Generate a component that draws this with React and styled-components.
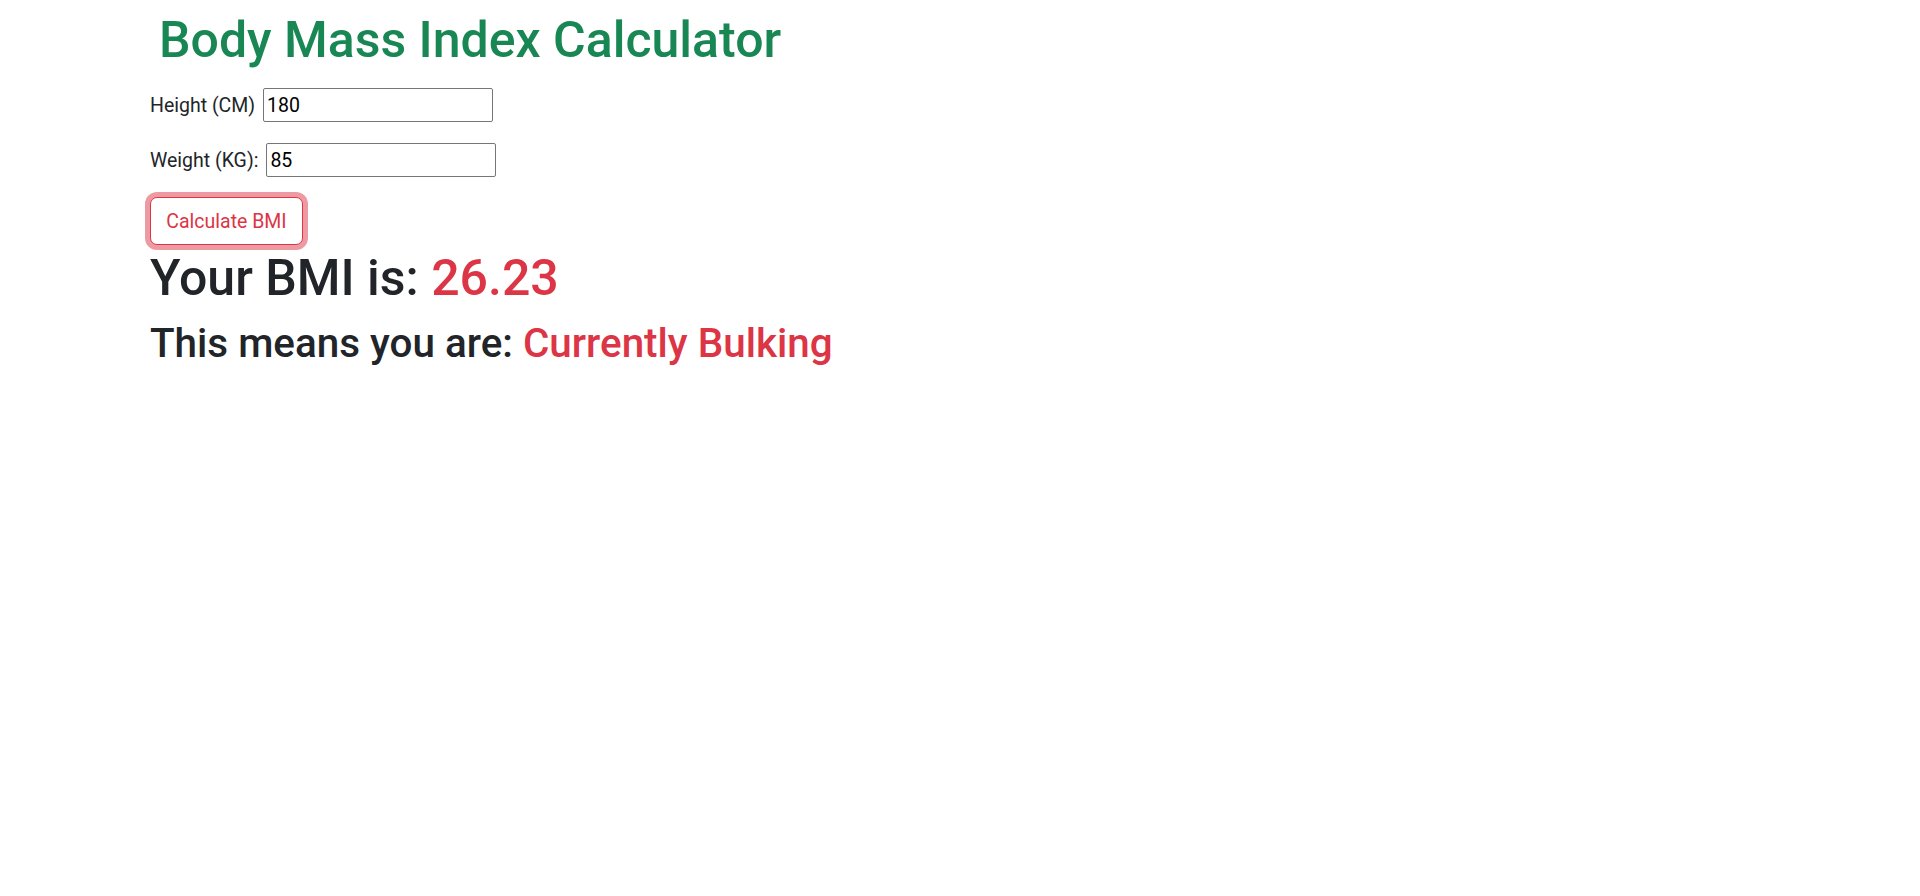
import React, { useState } from "react";
import styled, { createGlobalStyle } from "styled-components";

const GlobalStyle = createGlobalStyle`
  body {
    margin: 0;
    background: #ffffff;
    color: #212529;
    font-family: Roboto, "Liberation Sans", sans-serif;
  }
`;

const Page = styled.div`
  display: flex;
  flex-direction: column;
  align-items: flex-start;
  padding: 10px 0 0 150px;
`;

const Title = styled.h1`
  margin: 0 0 18px;
  padding-left: 9px;
  font-size: 50px;
  line-height: 60px;
  font-weight: 500;
  color: #198754;
`;

const Field = styled.div`
  display: flex;
  align-items: center;
  gap: 8px;
  height: 34px;
  margin-bottom: ${props => (props.last ? "20px" : "21px")};
`;

const Label = styled.label`
  font-size: 19.5px;
  color: #212529;
`;

const Input = styled.input`
  box-sizing: border-box;
  width: 230px;
  height: 34px;
  padding: 0 3px;
  border: 1px solid #767676;
  border-radius: 2px;
  font-family: inherit;
  font-size: 19.5px;
  color: #000;
  outline: none;
`;

const Button = styled.button`
  box-sizing: border-box;
  width: 153px;
  height: 48px;
  padding: 0 15px;
  border: 1px solid #dc3545;
  border-radius: 7px;
  background: #fff;
  color: #dc3545;
  font-family: inherit;
  font-size: 19.5px;
  box-shadow: 0 0 0 5px rgba(220, 53, 69, 0.5);
  cursor: pointer;
`;

const Result = styled.h1`
  margin: 3px 0 12px;
  font-size: 50px;
  line-height: 60px;
  font-weight: 500;
  color: #212529;
`;

const Verdict = styled.h2`
  margin: 0;
  font-size: 40.4px;
  line-height: 48px;
  font-weight: 500;
  color: #212529;
`;

const Danger = styled.span`
  color: #dc3545;
`;

const classify = bmi => {
  if (bmi < 18.5) return "Underweight";
  if (bmi < 25) return "Healthy";
  if (bmi < 30) return "Currently Bulking";
  return "Obese";
};

const App = () => {
  const [height, setHeight] = useState("180");
  const [weight, setWeight] = useState("85");
  const [bmi, setBmi] = useState(26.23);

  const calculate = () => {
    const m = Number(height) / 100;
    if (m > 0) setBmi(Math.round((Number(weight) / (m * m)) * 100) / 100);
  };

  return (
    <>
      <GlobalStyle />
      <Page>
        <Title>Body Mass Index Calculator</Title>
        <Field>
          <Label htmlFor="height">Height (CM)</Label>
          <Input id="height" value={height} onChange={e => setHeight(e.target.value)} />
        </Field>
        <Field last>
          <Label htmlFor="weight">Weight (KG):</Label>
          <Input id="weight" value={weight} onChange={e => setWeight(e.target.value)} />
        </Field>
        <Button onClick={calculate}>Calculate BMI</Button>
        <Result>
          Your BMI is: <Danger>{bmi.toFixed(2)}</Danger>
        </Result>
        <Verdict>
          This means you are: <Danger>{classify(bmi)}</Danger>
        </Verdict>
      </Page>
    </>
  );
};

export default App;
